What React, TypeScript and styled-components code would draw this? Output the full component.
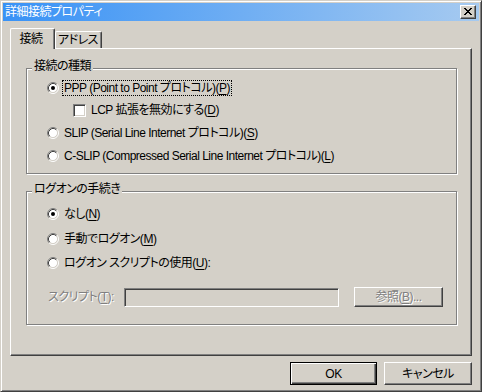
import React from 'react'
import styled, { createGlobalStyle } from 'styled-components'

const face = '#d4d0c8'

const GlobalStyle = createGlobalStyle`
  html, body {
    margin: 0;
    padding: 0;
    background: ${face};
  }
  body {
    font-family: 'Liberation Sans', 'Noto Sans CJK JP', sans-serif;
    font-size: 12px;
    letter-spacing: -0.5px;
    font-feature-settings: 'palt';
    color: #000;
  }
`

const Window = styled.div`
  width: 482px;
  height: 392px;
  box-sizing: border-box;
  background: ${face};
  border: 1px solid;
  border-color: ${face} #404040 #404040 ${face};
  box-shadow: inset 1px 1px 0 #fff, inset -1px -1px 0 #808080;
  padding: 2px;
  display: flex;
  flex-direction: column;
`

const TitleBar = styled.div`
  height: 18px;
  flex-shrink: 0;
  display: flex;
  align-items: center;
  padding: 0 3px 0 2px;
  background: linear-gradient(to right, #3892f6, #a6caf0);
  color: #fff;
  line-height: 14px;
`

const TitleText = styled.span`
  flex: 1;
  white-space: nowrap;
`

const CloseButton = styled.div`
  width: 16px;
  height: 14px;
  box-sizing: border-box;
  background: ${face};
  border: 1px solid;
  border-color: #fff #404040 #404040 #fff;
  box-shadow: inset -1px -1px 0 #808080;
  display: flex;
  align-items: center;
  justify-content: center;
  padding: 0 1px 1px 0;
`

const Body = styled.div`
  flex: 1;
  display: flex;
  flex-direction: column;
  padding: 7px 7px 4px 7px;
`

const TabStrip = styled.div`
  display: flex;
  align-items: flex-end;
  height: 20px;
`

const Tab = styled.div<{ $active?: boolean; $w: number }>`
  box-sizing: border-box;
  width: ${p => p.$w}px;
  height: ${p => (p.$active ? 21 : 17)}px;
  margin-bottom: ${p => (p.$active ? -1 : 0)}px;
  position: relative;
  z-index: ${p => (p.$active ? 1 : 0)};
  background: ${face};
  border-top: 1px solid #fff;
  border-left: 1px solid #fff;
  border-right: 1px solid #404040;
  box-shadow: inset -1px 0 0 #808080;
  border-radius: 2px 2px 0 0;
  display: flex;
  align-items: center;
  justify-content: center;
  line-height: 14px;
  padding-right: ${p => (p.$active ? 3 : 1)}px;
  white-space: nowrap;
`

const Panel = styled.div`
  box-sizing: border-box;
  height: 308px;
  border-top: 1px solid #fff;
  border-left: 1px solid #fff;
  border-right: 1px solid #404040;
  border-bottom: 1px solid #404040;
  box-shadow: inset -1px -1px 0 #808080;
  padding: 19px 0 0 15px;
`

const GroupBox = styled.div<{ $h: number; $pt: number; $mt?: number }>`
  position: relative;
  box-sizing: border-box;
  width: 431px;
  height: ${p => p.$h}px;
  margin-top: ${p => p.$mt ?? 0}px;
  border: 1px solid #808080;
  box-shadow: inset 1px 1px 0 #fff, 1px 1px 0 #fff;
  padding: ${p => p.$pt}px 0 0 20px;
`

const Caption = styled.span`
  position: absolute;
  top: -10px;
  left: 5px;
  padding: 0 2px;
  background: ${face};
  line-height: 14px;
  white-space: nowrap;
`

const Row = styled.div<{ $h: number; $indent?: number; $mt?: number }>`
  display: flex;
  align-items: center;
  height: ${p => p.$h}px;
  margin-top: ${p => p.$mt ?? 0}px;
  padding-left: ${p => p.$indent ?? 0}px;
`

const Label = styled.span<{ $focus?: boolean; $disabled?: boolean }>`
  margin-left: 3px;
  border: 1px dotted ${p => (p.$focus ? '#000' : 'transparent')};
  padding: 0 1px;
  line-height: 14px;
  white-space: nowrap;
  color: ${p => (p.$disabled ? '#808080' : '#000')};
  text-shadow: ${p => (p.$disabled ? '1px 1px 0 #fff' : 'none')};
`

const U = styled.span`
  text-decoration: underline;
  text-underline-offset: 2px;
`

const CheckBox = styled.span`
  width: 13px;
  height: 13px;
  box-sizing: border-box;
  flex-shrink: 0;
  background: #fff;
  border: 1px solid;
  border-color: #808080 #fff #fff #808080;
  box-shadow: inset 1px 1px 0 #404040, inset -1px -1px 0 ${face};
`

const TextBox = styled.div`
  width: 215px;
  height: 19px;
  box-sizing: border-box;
  background: ${face};
  border: 1px solid;
  border-color: #808080 #fff #fff #808080;
  box-shadow: inset 1px 1px 0 #404040, inset -1px -1px 0 ${face};
`

const ScriptLabel = styled.span`
  width: 76px;
  padding-left: 1px;
  line-height: 14px;
  white-space: nowrap;
  color: #808080;
  text-shadow: 1px 1px 0 #fff;
`

const Spacer = styled.div<{ $w: number }>`
  width: ${p => p.$w}px;
  flex-shrink: 0;
`

const Button = styled.div<{ $w: number; $h?: number; $default?: boolean; $disabled?: boolean }>`
  width: ${p => p.$w}px;
  height: ${p => p.$h ?? 23}px;
  box-sizing: border-box;
  background: ${face};
  border: 1px solid;
  border-color: ${p => (p.$default ? '#000' : '#fff #404040 #404040 #fff')};
  box-shadow: ${p =>
    p.$default
      ? 'inset 1px 1px 0 #fff, inset -1px -1px 0 #404040, inset -2px -2px 0 #808080'
      : 'inset -1px -1px 0 #808080'};
  display: flex;
  align-items: center;
  justify-content: center;
  line-height: 14px;
  white-space: nowrap;
  color: ${p => (p.$disabled ? '#808080' : '#000')};
  text-shadow: ${p => (p.$disabled ? '1px 1px 0 #fff' : 'none')};
`

const ButtonRow = styled.div`
  display: flex;
  justify-content: flex-end;
  gap: 7px;
  margin-top: 6px;
`

const Radio = ({ checked }: { checked?: boolean }) => (
  <svg width="12" height="12" viewBox="0 0 12 12" style={{ flexShrink: 0 }}>
    <circle cx="6" cy="6" r="4.5" fill="#fff" />
    <path d="M2.11 9.89 A5.5 5.5 0 0 1 9.89 2.11" stroke="#808080" fill="none" />
    <path d="M9.89 2.11 A5.5 5.5 0 0 1 2.11 9.89" stroke="#fff" fill="none" />
    <path d="M2.82 9.18 A4.5 4.5 0 0 1 9.18 2.82" stroke="#404040" fill="none" />
    <path d="M9.18 2.82 A4.5 4.5 0 0 1 2.82 9.18" stroke={face} fill="none" />
    {checked && <circle cx="6" cy="6" r="2" fill="#000" />}
  </svg>
)

const CloseGlyph = () => (
  <svg width="8" height="7" viewBox="0 0 8 7" shapeRendering="crispEdges">
    <path
      fill="#000"
      d="M0 0h2v1H0zM6 0h2v1H6zM1 1h2v1H1zM5 1h2v1H5zM2 2h4v1H2zM3 3h2v1H3zM2 4h4v1H2zM1 5h2v1H1zM5 5h2v1H5zM0 6h2v1H0zM6 6h2v1H6z"
    />
  </svg>
)

export default function App() {
  return (
    <>
      <GlobalStyle />
      <Window>
        <TitleBar>
          <TitleText>詳細接続プロパティ</TitleText>
          <CloseButton>
            <CloseGlyph />
          </CloseButton>
        </TitleBar>
        <Body>
          <TabStrip>
            <Tab $active $w={45}>接続</Tab>
            <Tab $w={47}>アドレス</Tab>
          </TabStrip>
          <Panel>
            <GroupBox $h={106} $pt={8}>
              <Caption>接続の種類</Caption>
              <Row $h={22}>
                <Radio checked />
                <Label $focus>
                  PPP (Point to Point プロトコル)(<U>P</U>)
                </Label>
              </Row>
              <Row $h={22} $indent={26}>
                <CheckBox />
                <Label>
                  LCP 拡張を無効にする(<U>D</U>)
                </Label>
              </Row>
              <Row $h={23}>
                <Radio />
                <Label>
                  SLIP (Serial Line Internet プロトコル)(<U>S</U>)
                </Label>
              </Row>
              <Row $h={23}>
                <Radio />
                <Label>
                  C-SLIP (Compressed Serial Line Internet プロトコル)(<U>L</U>)
                </Label>
              </Row>
            </GroupBox>
            <GroupBox $h={134} $pt={10} $mt={17}>
              <Caption>ログオンの手続き</Caption>
              <Row $h={24}>
                <Radio checked />
                <Label>
                  なし(<U>N</U>)
                </Label>
              </Row>
              <Row $h={25}>
                <Radio />
                <Label>
                  手動でログオン(<U>M</U>)
                </Label>
              </Row>
              <Row $h={24}>
                <Radio />
                <Label>
                  ログオン スクリプトの使用(<U>U</U>):
                </Label>
              </Row>
              <Row $h={24} $mt={10}>
                <ScriptLabel>
                  スクリプト(<U>T</U>):
                </ScriptLabel>
                <TextBox />
                <Spacer $w={15} />
                <Button $w={89} $h={20} $disabled>
                  参照(<U>B</U>)...
                </Button>
              </Row>
            </GroupBox>
          </Panel>
          <ButtonRow>
            <Button $w={87} $default>OK</Button>
            <Button $w={88}>キャンセル</Button>
          </ButtonRow>
        </Body>
      </Window>
    </>
  )
}
